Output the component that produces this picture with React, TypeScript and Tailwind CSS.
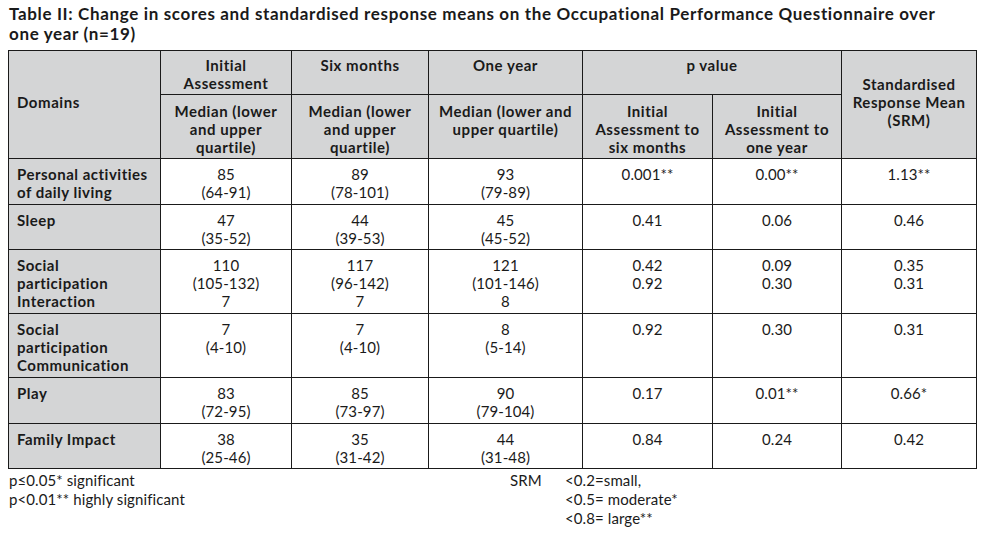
import React from "react";

const font = { fontFamily: "Lato, 'Open Sans', sans-serif" };

type Row = { domain: string[]; h: string; cells: string[][] };

const rows: Row[] = [
  { domain: ["Personal activities", "of daily living"], h: "h-[46px]", cells: [["85", "(64-91)"], ["89", "(78-101)"], ["93", "(79-89)"], ["0.001**"], ["0.00**"], ["1.13**"]] },
  { domain: ["Sleep"], h: "h-[45px]", cells: [["47", "(35-52)"], ["44", "(39-53)"], ["45", "(45-52)"], ["0.41"], ["0.06"], ["0.46"]] },
  { domain: ["Social", "participation", "Interaction"], h: "h-[64px]", cells: [["110", "(105-132)", "7"], ["117", "(96-142)", "7"], ["121", "(101-146)", "8"], ["0.42", "0.92"], ["0.09", "0.30"], ["0.35", "0.31"]] },
  { domain: ["Social", "participation", "Communication"], h: "h-[64px]", cells: [["7", "(4-10)"], ["7", "(4-10)"], ["8", "(5-14)"], ["0.92"], ["0.30"], ["0.31"]] },
  { domain: ["Play"], h: "h-[46px]", cells: [["83", "(72-95)"], ["85", "(73-97)"], ["90", "(79-104)"], ["0.17"], ["0.01**"], ["0.66*"]] },
  { domain: ["Family Impact"], h: "h-[45px]", cells: [["38", "(25-46)"], ["35", "(31-42)"], ["44", "(31-48)"], ["0.84"], ["0.24"], ["0.42"]] },
];

const bd = "border border-[#1a1a1a]";
const hd = `${bd} bg-[#d4d5d6] font-bold tracking-[0.55px] text-center align-top`;

export default function App() {
  return (
    <div className="w-[984px] h-[534px] bg-white text-[#1a1a1a] pl-[8px] pt-[4px]" style={font}>
      <div className="text-[17px] font-bold leading-[20px] tracking-[0.65px] pl-[1px]">
        <div>Table II: Change in scores and standardised response means on the Occupational Performance Questionnaire over</div>
        <div>one year (n=19)</div>
      </div>
      <table className="mt-[6px] border-collapse text-[15px] leading-[18px] table-fixed w-[968px]">
        <colgroup>
          <col className="w-[152px]" />
          <col className="w-[131px]" />
          <col className="w-[137px]" />
          <col className="w-[154px]" />
          <col className="w-[130px]" />
          <col className="w-[129px]" />
          <col className="w-[135px]" />
        </colgroup>
        <thead>
          <tr className="h-[44px]">
            <th rowSpan={2} className={`${bd} bg-[#d4d5d6] font-bold tracking-[0.55px] text-left align-middle px-[8px] pb-[6px]`}>Domains</th>
            <th className={`${hd} pt-[5px]`}>Initial<br />Assessment</th>
            <th className={`${hd} pt-[5px]`}>Six months</th>
            <th className={`${hd} pt-[5px]`}>One year</th>
            <th colSpan={2} className={`${hd} pt-[5px]`}>p value</th>
            <th rowSpan={2} className={`${bd} bg-[#d4d5d6] font-bold tracking-[0.55px] text-center align-middle pb-[6px]`}>Standardised<br />Response Mean<br />(SRM)</th>
          </tr>
          <tr className="h-[64px]">
            <th className={`${hd} pt-[7px]`}>Median (lower<br />and upper<br />quartile)</th>
            <th className={`${hd} pt-[7px]`}>Median (lower<br />and upper<br />quartile)</th>
            <th className={`${hd} pt-[7px] whitespace-nowrap`}>Median (lower and<br />upper quartile)</th>
            <th className={`${hd} pt-[7px] whitespace-nowrap`}>Initial<br />Assessment to<br />six months</th>
            <th className={`${hd} pt-[7px] whitespace-nowrap`}>Initial<br />Assessment to<br />one year</th>
          </tr>
        </thead>
        <tbody>
          {rows.map((r, i) => (
            <tr key={i} className={r.h}>
              <td className={`${bd} bg-[#d4d5d6] font-bold tracking-[0.5px] text-left align-top px-[8px] pt-[6px]`}>
                {r.domain.map((d, j) => (
                  <div key={j}>{d}</div>
                ))}
              </td>
              {r.cells.map((c, j) => (
                <td key={j} className={`${bd} bg-white text-center align-top tracking-[0.1px] pt-[6px]`}>
                  {c.map((t, k) => (
                    <div key={k}>{t}</div>
                  ))}
                </td>
              ))}
            </tr>
          ))}
        </tbody>
      </table>
      <div className="flex text-[15px] leading-[19px] tracking-[0.1px] pt-[2px]">
        <div className="w-[502px] pl-[1px]">
          <div>p≤0.05* significant</div>
          <div>p&lt;0.01** highly significant</div>
        </div>
        <div className="w-[55px]">SRM</div>
        <div>
          <div>&lt;0.2=small,</div>
          <div>&lt;0.5= moderate*</div>
          <div>&lt;0.8= large**</div>
        </div>
      </div>
    </div>
  );
}
